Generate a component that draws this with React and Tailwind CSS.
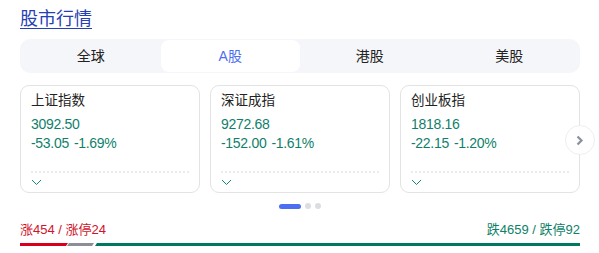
import React, { useState } from "react";

const tabs = ["全球", "A股", "港股", "美股"];

const cards = [
  { name: "上证指数", value: "3092.50", change: "-53.05", pct: "-1.69%" },
  { name: "深证成指", value: "9272.68", change: "-152.00", pct: "-1.61%" },
  { name: "创业板指", value: "1818.16", change: "-22.15", pct: "-1.20%" },
];

const font = {
  fontFamily: '"Liberation Sans", "Noto Sans CJK SC", sans-serif',
};

const IndexCard = ({ card }) => (
  <div className="w-[180px] h-[108px] shrink-0 border border-[#e3e3e3] rounded-[9px] px-[10px] pt-[5px] flex flex-col">
    <div className="text-[13.5px] leading-[20px] text-[#222]">{card.name}</div>
    <div className="text-[14px] leading-[18px] mt-[4px] text-[#0f7f6b] tracking-[-0.3px]">{card.value}</div>
    <div className="text-[14px] leading-[18px] mt-[1px] text-[#0f7f6b] tracking-[-0.3px] flex gap-[5px]">
      <span>{card.change}</span>
      <span>{card.pct}</span>
    </div>
    <div className="mt-[19px] border-t-2 border-dotted border-[#ececec]" />
    <div className="mt-[6px]">
      <svg width="11" height="7" viewBox="0 0 11 7" fill="none" className="block">
        <path d="M1 1l4.5 4.5L10 1" stroke="#108a72" strokeWidth="1" />
      </svg>
    </div>
  </div>
);

export default function App() {
  const [active, setActive] = useState(1);

  return (
    <div className="w-[599px] h-[253px] bg-white px-[20px] pt-[6px]" style={font}>
      <a href="#" className="text-[18px] leading-[26px] text-[#2440b3] underline underline-offset-[3px]">
        股市行情
      </a>
      <div className="mt-[7px] h-[34px] w-[560px] bg-[#f5f6f9] rounded-[10px] flex p-[1px]">
        {tabs.map((t, i) => (
          <button
            key={t}
            onClick={() => setActive(i)}
            className={
              i === active
                ? "flex-1 bg-white rounded-[8px] text-[14px] text-[#4e6ef2]"
                : "flex-1 text-[14px] text-[#222]"
            }
          >
            {t}
          </button>
        ))}
      </div>
      <div className="relative mt-[12px] flex gap-[10px]">
        {cards.map((c) => (
          <IndexCard key={c.name} card={c} />
        ))}
        <div className="absolute left-[545px] top-[40px] w-[30px] h-[30px] rounded-full bg-white/90 border border-[#eeeeee] flex items-center justify-center">
          <svg width="8" height="11" viewBox="0 0 8 11" fill="none">
            <path d="M1.5 1.5l4 4-4 4" stroke="#8b90a0" strokeWidth="2.2" />
          </svg>
        </div>
      </div>
      <div className="mt-[10px] flex justify-center gap-[4px] items-center pl-[1px]">
        <div className="w-[22px] h-[5px] rounded-full bg-[#4e6ef2]" />
        <div className="w-[6px] h-[6px] rounded-full bg-[#dcdde0]" />
        <div className="w-[6px] h-[6px] rounded-full bg-[#dcdde0]" />
      </div>
      <div className="mt-[12px] flex justify-between text-[13px] leading-[18px] w-[560px]">
        <span className="text-[#d0122a]">涨454 / 涨停24</span>
        <span className="text-[#0e7f68]">跌4659 / 跌停92</span>
      </div>
      <div className="mt-[4px] w-[560px] h-[3px] overflow-hidden">
        <svg width="560" height="3" viewBox="0 0 560 3" preserveAspectRatio="none" className="block">
          <polygon points="0,0 48,0 46,3 0,3" fill="#d6001c" />
          <polygon points="49,0 74,0 72,3 47,3" fill="#8c8d96" />
          <polygon points="77,0 560,0 560,3 75,3" fill="#00775f" />
        </svg>
      </div>
    </div>
  );
}
